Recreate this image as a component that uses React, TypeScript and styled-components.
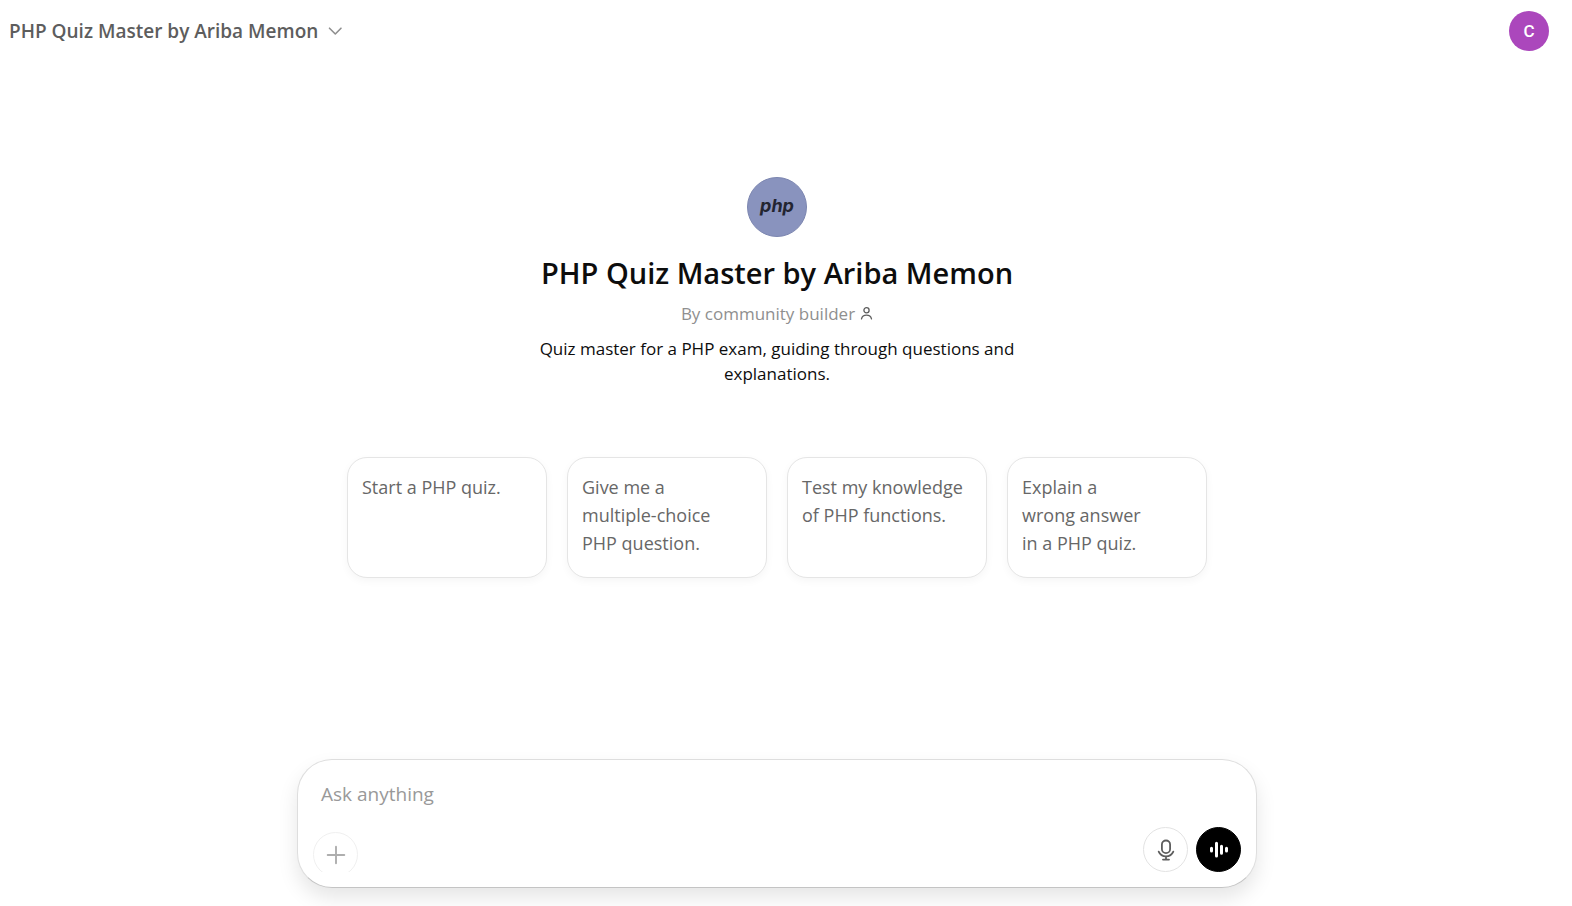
import React, { useState } from "react";
import styled, { createGlobalStyle } from "styled-components";

const GlobalStyle = createGlobalStyle`
  *, *::before, *::after { box-sizing: border-box; }
  body {
    margin: 0;
    background: #fff;
    color: #0d0d0d;
    font-family: "Segoe UI", "Open Sans", "Noto Sans", sans-serif;
  }
  button, textarea { font: inherit; color: inherit; }
  button { cursor: pointer; }
  h1, p { margin: 0; }
`;

const Page = styled.div`
  min-height: 100vh;
  display: flex;
  flex-direction: column;
  padding-right: 18px;
`;

const Header = styled.header`
  display: flex;
  align-items: center;
  justify-content: space-between;
  height: 62px;
  padding: 0 5px 0 0;
`;

const ModelButton = styled.button`
  display: flex;
  align-items: center;
  gap: 9px;
  padding: 4px 9px;
  border: 0;
  border-radius: 8px;
  background: none;
  color: #5d5d5d;
  font-size: 19px;
  font-weight: 600;
  line-height: 28px;
`;

const Avatar = styled.button`
  width: 40px;
  height: 40px;
  padding: 0;
  border: 0;
  border-radius: 50%;
  background: #ab47bc;
  color: #fff;
  font-family: Roboto, sans-serif;
  font-size: 17px;
  font-weight: 500;
`;

const Main = styled.main`
  flex: 1;
  display: flex;
  flex-direction: column;
  align-items: center;
  justify-content: center;
  padding: 0 20px 67px;
`;

const Hero = styled.section`
  display: flex;
  flex-direction: column;
  align-items: center;
  max-width: 480px;
  text-align: center;
`;

const Logo = styled.div`
  display: flex;
  align-items: center;
  justify-content: center;
  width: 60px;
  height: 60px;
  padding-bottom: 2px;
  border: 1px solid #7c86b0;
  border-radius: 50%;
  background: #8993be;
  color: #232531;
  font-family: Inter, sans-serif;
  font-size: 18px;
  font-style: italic;
  font-weight: 700;
  line-height: 20px;
`;

const Title = styled.h1`
  margin-top: 16px;
  font-size: 29px;
  font-weight: 550;
  line-height: 40px;
  white-space: nowrap;
`;

const Byline = styled.p`
  display: flex;
  align-items: center;
  gap: 5px;
  margin-top: 8px;
  color: #8f8f8f;
  font-size: 17px;
  line-height: 25px;
`;

const Description = styled.p`
  margin-top: 10px;
  font-size: 17px;
  line-height: 25px;
`;

const Starters = styled.div`
  display: grid;
  grid-template-columns: repeat(4, 200px);
  gap: 20px;
  margin-top: 71px;

  @media (max-width: 900px) {
    grid-template-columns: repeat(2, 200px);
  }
`;

const Starter = styled.button`
  display: flex;
  align-items: flex-start;
  min-height: 121px;
  padding: 15px 14px;
  border: 1px solid #e5e5e5;
  border-radius: 20px;
  background: #fff;
  box-shadow: 0 3px 8px rgba(0, 0, 0, 0.04);
  color: #676767;
  font-size: 18px;
  line-height: 28px;
  text-align: left;

  span { text-wrap: balance; }
`;

const Composer = styled.form`
  display: flex;
  flex-direction: column;
  width: calc(100% - 40px);
  max-width: 960px;
  min-height: 129px;
  margin: 0 auto 18px;
  padding: 19px 15px 15px;
  border: 1px solid #dedede;
  border-bottom-color: #c4c4c4;
  border-radius: 35px;
  background: #fff;
  box-shadow: 0 10px 20px rgba(0, 0, 0, 0.1);
`;

const Prompt = styled.textarea`
  height: 30px;
  padding: 0 8px;
  border: 0;
  outline: 0;
  resize: none;
  overflow: hidden;
  background: none;
  font-size: 19px;
  line-height: 30px;

  &::placeholder { color: #999; opacity: 1; }
`;

const Tools = styled.div`
  display: flex;
  gap: 8px;
  height: 45px;
  margin-top: auto;
`;

const AddSlot = styled.div`
  flex: 1;
  padding-top: 5px;
  overflow: hidden;
`;

const RoundButton = styled.button<{ $tone?: "dark" | "faint" }>`
  display: flex;
  align-items: center;
  justify-content: center;
  width: 45px;
  height: 45px;
  padding: 0;
  border: 1px solid
    ${(p) => (p.$tone === "dark" ? "#000" : p.$tone === "faint" ? "#f0f0f0" : "#e3e3e3")};
  border-radius: 50%;
  background: ${(p) => (p.$tone === "dark" ? "#000" : "#fff")};
  color: ${(p) => (p.$tone === "dark" ? "#fff" : p.$tone === "faint" ? "#aeaeae" : "#5d5d5d")};
`;

const starters = [
  "Start a PHP quiz.",
  "Give me a multiple-choice PHP question.",
  "Test my knowledge of PHP functions.",
  "Explain a wrong answer in a PHP quiz.",
];

const line = { fill: "none", stroke: "currentColor", strokeLinecap: "round", strokeLinejoin: "round" } as const;

const ChevronIcon = () => (
  <svg width="16" height="16" viewBox="0 0 16 16" aria-hidden="true" {...line} stroke="#8f8f8f" strokeWidth="1.6">
    <path d="M2.5 5.2 8.3 11l5.7-5.8" />
  </svg>
);

const PersonIcon = () => (
  <svg width="13" height="14" viewBox="0 0 13 14" aria-hidden="true" {...line} stroke="#5d5d5d" strokeWidth="1.3">
    <circle cx="6.5" cy="4.200" r="2.600" />
    <path d="M1.500 12.800c.6-2.400 2.500-3.700 5-3.700s4.400 1.300 5 3.700" />
  </svg>
);

const PlusIcon = () => (
  <svg width="20" height="20" viewBox="0 0 20 20" aria-hidden="true" {...line} strokeWidth="1.9">
    <path d="M10 1.700v16.600M1.700 10h16.600" />
  </svg>
);

const MicIcon = () => (
  <svg width="18" height="22" viewBox="0 0 18 22" aria-hidden="true" {...line} strokeWidth="1.8">
    <rect x="4.900" y="1.500" width="8.200" height="12.600" rx="4.100" />
    <path d="M1.700 12.700C3 15.700 5.700 17.400 9 17.400s6-1.700 7.300-4.700M9 17.400v3.200M6 20.600h6" />
  </svg>
);

const VoiceIcon = () => (
  <svg width="20" height="20" viewBox="0 0 20 20" aria-hidden="true" {...line} strokeWidth="3">
    <path d="M2.500 8.300v2.800M7.500 3.300v12.800M12.500 6.300v6.900M17.500 8.300v2.800" />
  </svg>
);

export default function App() {
  const [prompt, setPrompt] = useState("");

  return (
    <>
      <GlobalStyle />
      <Page>
        <Header>
          <ModelButton type="button">
            PHP Quiz Master by Ariba Memon
            <ChevronIcon />
          </ModelButton>
          <Avatar type="button">C</Avatar>
        </Header>
        <Main>
          <Hero>
            <Logo>php</Logo>
            <Title>PHP Quiz Master by Ariba Memon</Title>
            <Byline>
              By community builder
              <PersonIcon />
            </Byline>
            <Description>
              Quiz master for a PHP exam, guiding through questions and explanations.
            </Description>
          </Hero>
          <Starters>
            {starters.map((text) => (
              <Starter key={text} type="button" onClick={() => setPrompt(text)}>
                <span>{text}</span>
              </Starter>
            ))}
          </Starters>
        </Main>
        <Composer onSubmit={(e) => e.preventDefault()}>
          <Prompt
            aria-label="Ask anything"
            placeholder="Ask anything"
            rows={1}
            value={prompt}
            onChange={(e) => setPrompt(e.target.value)}
          />
          <Tools>
            <AddSlot>
              <RoundButton type="button" $tone="faint" aria-label="Add files">
                <PlusIcon />
              </RoundButton>
            </AddSlot>
            <RoundButton type="button" aria-label="Dictate">
              <MicIcon />
            </RoundButton>
            <RoundButton type="button" $tone="dark" aria-label="Use voice mode">
              <VoiceIcon />
            </RoundButton>
          </Tools>
        </Composer>
      </Page>
    </>
  );
}
